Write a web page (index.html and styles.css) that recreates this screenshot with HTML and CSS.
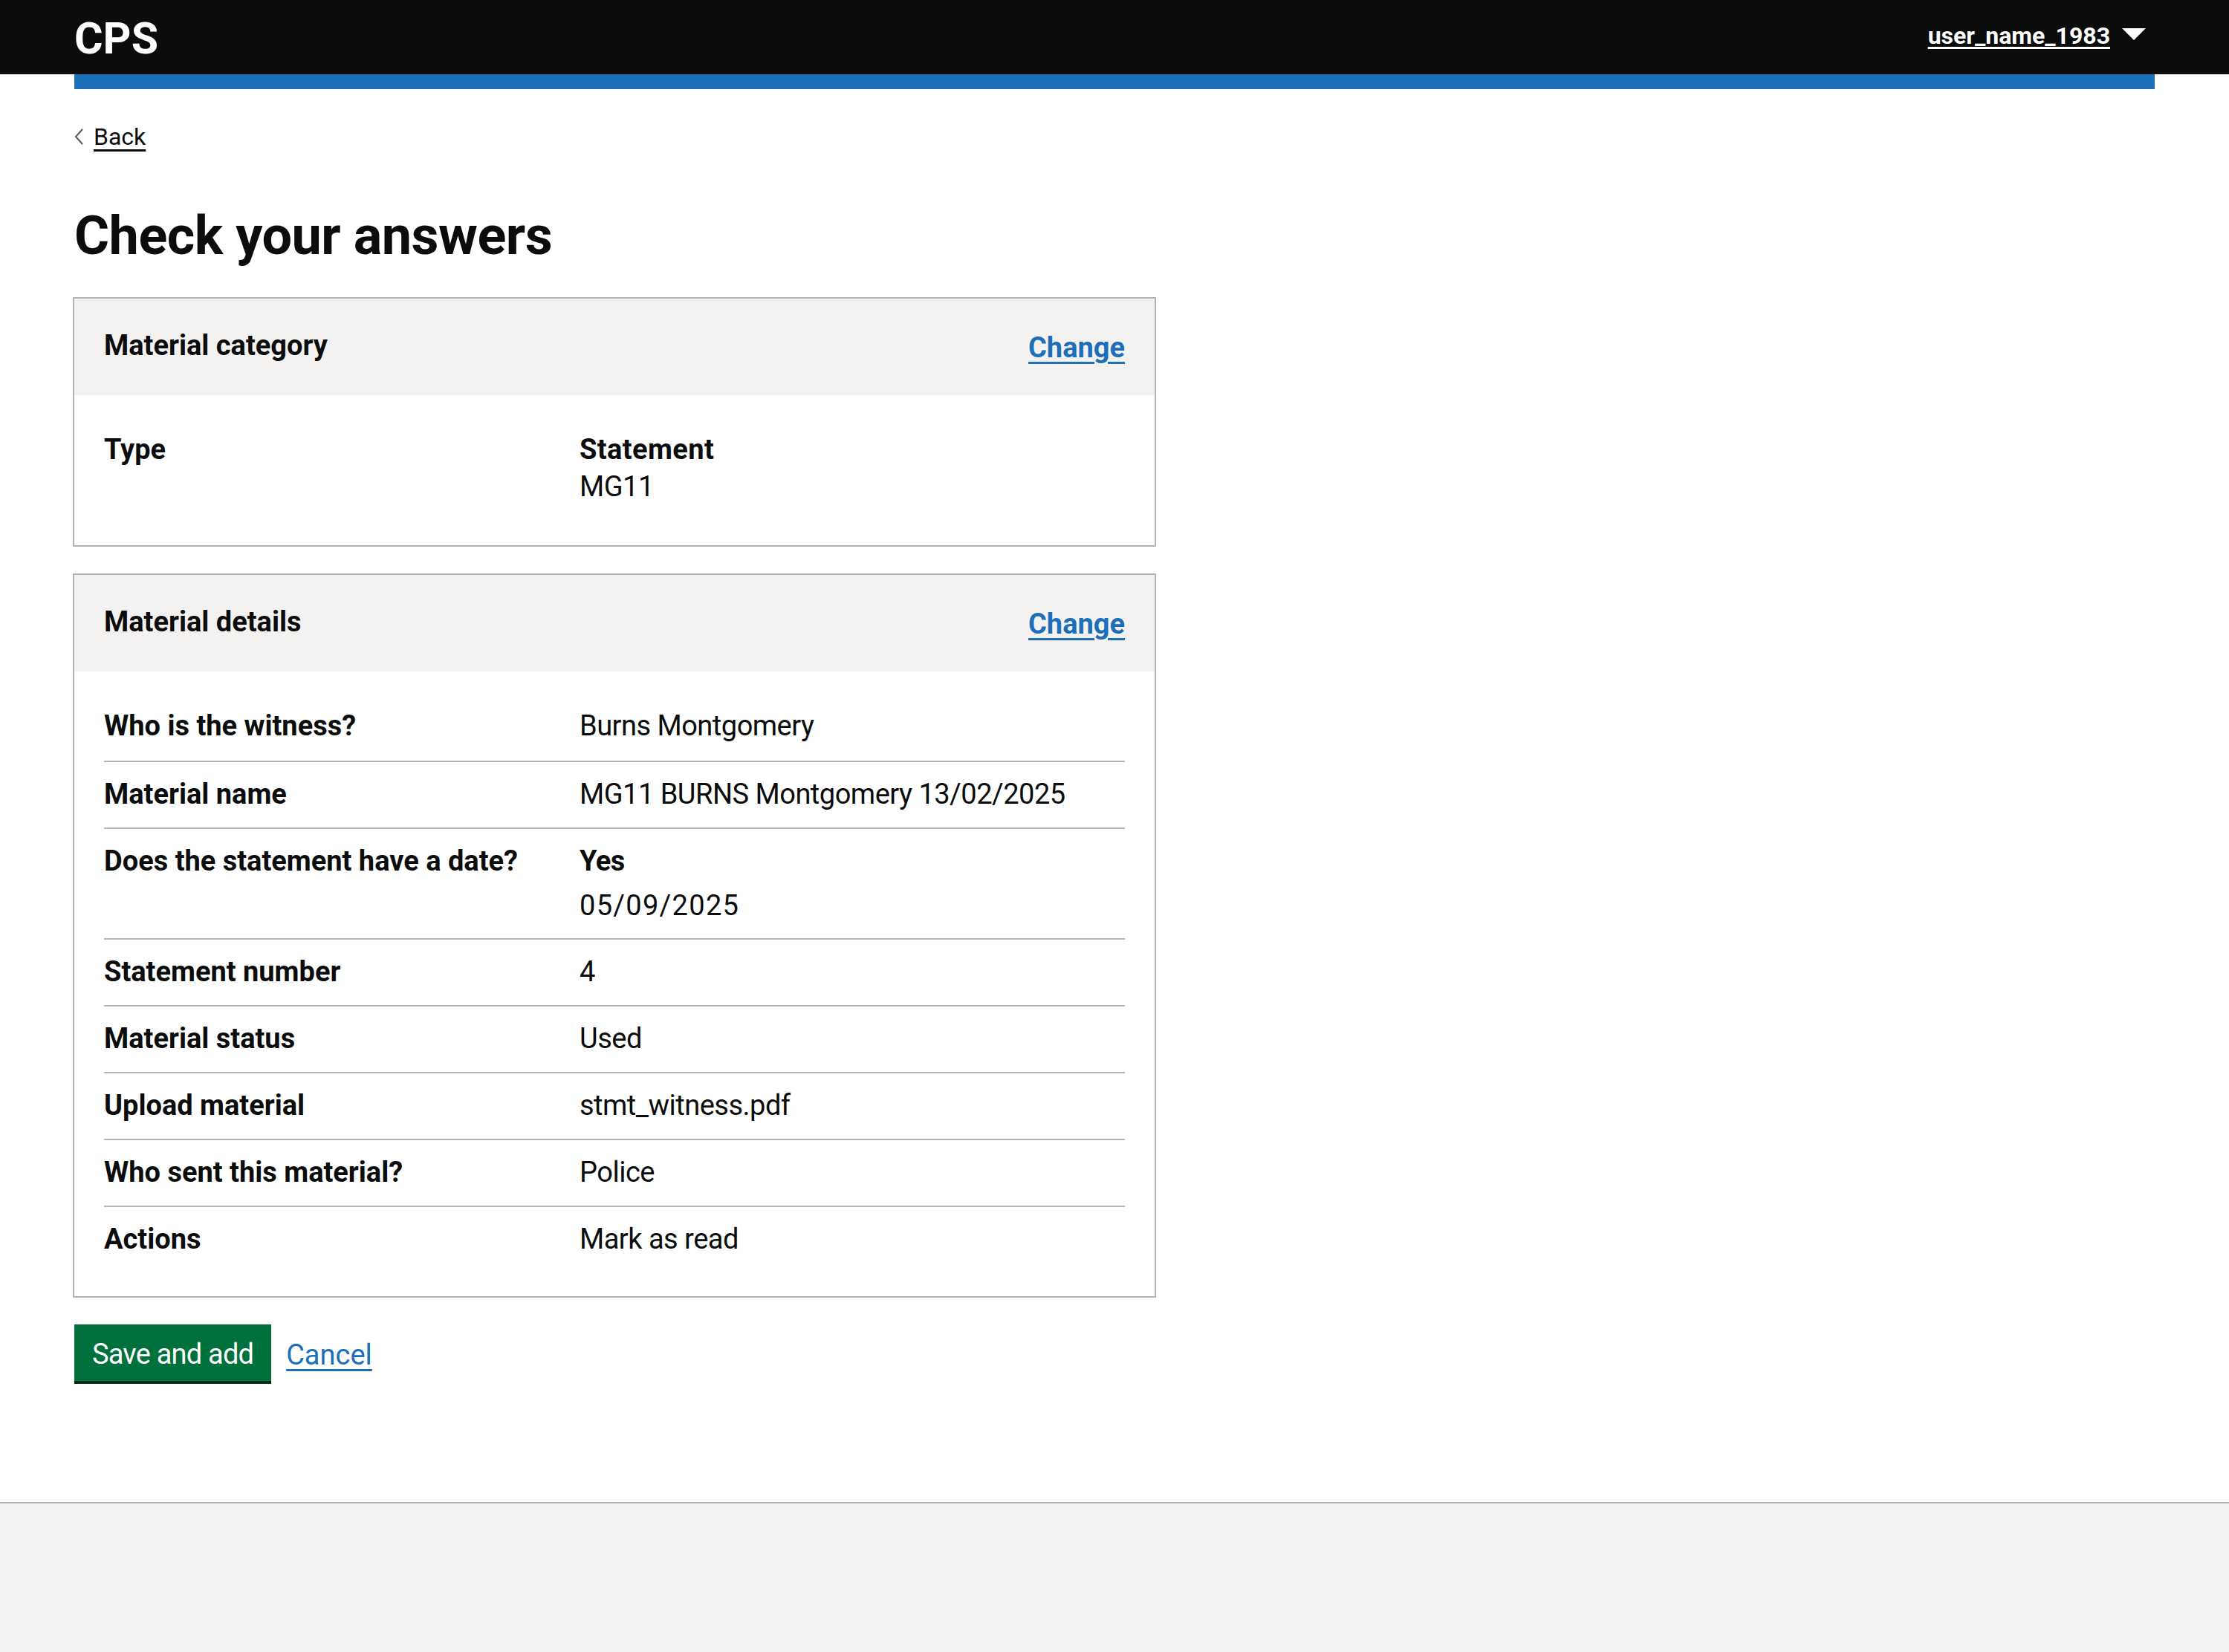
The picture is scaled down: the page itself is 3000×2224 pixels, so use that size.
FILE: index.html
```html
<!DOCTYPE html>
<html lang="en">
<head>
    <meta charset="UTF-8">
    <title>Check your answers</title>
    <link rel="stylesheet" href="styles.css">
</head>
<body>
    <header class="top-bar">
        <a class="logo">CPS</a>
        <div class="user-menu">
            <a class="user-name">user_name_1983</a>
            <svg class="user-caret" width="32" height="16" viewBox="0 0 32 16"><path d="M0 0H32L16 16Z" fill="#fff"/></svg>
        </div>
    </header>
    <div class="blue-bar"></div>

    <main class="page">
        <a class="back-link">
            <svg class="back-icon" width="12" height="24" viewBox="0 0 12 24"><path d="M11 2L2 12L11 22" fill="none" stroke="#505a5f" stroke-width="2"/></svg>
            <span>Back</span>
        </a>

        <h1>Check your answers</h1>

        <section class="card">
            <div class="card-header">
                <h2>Material category</h2>
                <a class="change-link">Change</a>
            </div>
            <dl class="card-body">
                <div class="row">
                    <dt>Type</dt>
                    <dd><strong>Statement</strong><br>MG11</dd>
                </div>
            </dl>
        </section>

        <section class="card">
            <div class="card-header">
                <h2>Material details</h2>
                <a class="change-link">Change</a>
            </div>
            <dl class="card-body">
                <div class="row">
                    <dt>Who is the witness?</dt>
                    <dd>Burns Montgomery</dd>
                </div>
                <div class="row">
                    <dt>Material name</dt>
                    <dd>MG11 BURNS Montgomery 13/02/2025</dd>
                </div>
                <div class="row">
                    <dt>Does the statement have a date?</dt>
                    <dd><p class="date-answer"><strong class="date-yes">Yes</strong></p><p class="date-answer date-value">05/09/2025</p></dd>
                </div>
                <div class="row">
                    <dt>Statement number</dt>
                    <dd>4</dd>
                </div>
                <div class="row">
                    <dt>Material status</dt>
                    <dd>Used</dd>
                </div>
                <div class="row">
                    <dt>Upload material</dt>
                    <dd>stmt_witness.pdf</dd>
                </div>
                <div class="row">
                    <dt>Who sent this material?</dt>
                    <dd>Police</dd>
                </div>
                <div class="row">
                    <dt>Actions</dt>
                    <dd>Mark as read</dd>
                </div>
            </dl>
        </section>

        <div class="actions">
            <button class="save-button" type="button">Save and add</button>
            <a class="cancel-link">Cancel</a>
        </div>
    </main>

    <footer class="footer"></footer>
</body>
</html>
```

FILE: styles.css
```css
* {
    box-sizing: border-box;
}

html, body {
    height: 100%;
}

body {
    margin: 0;
    display: flex;
    flex-direction: column;
    font-family: Roboto, Arial, sans-serif;
    font-size: 38px;
    line-height: 50px;
    color: #0b0c0c;
    background-color: #fff;
}

.top-bar {
    height: 100px;
    padding: 0 112px 0 100px;
    display: flex;
    justify-content: space-between;
    background-color: #0b0c0c;
    color: #fff;
}

.logo {
    padding-top: 2px;
    font-size: 59px;
    line-height: 100px;
    font-weight: 700;
}

.user-menu {
    display: flex;
    align-items: flex-start;
    gap: 16px;
    padding-top: 24px;
}

.user-name {
    font-size: 32px;
    line-height: 48px;
    font-weight: 700;
    text-decoration: underline;
    text-underline-offset: 4px;
}

.user-caret {
    margin-top: 14px;
}

.blue-bar {
    height: 20px;
    margin: 0 100px;
    background-color: #1d70b8;
}

.page {
    padding: 40px 100px 0;
    flex-grow: 1;
}

.back-link {
    display: flex;
    align-items: center;
    gap: 14px;
    font-size: 32px;
    line-height: 48px;
}

.back-link span {
    text-decoration: underline;
    text-underline-offset: 6px;
}

h1 {
    margin: 70px 0 42px;
    font-size: 72px;
    line-height: 80px;
    font-weight: 700;
    letter-spacing: -0.5px;
}

.card {
    width: 1458px;
    margin: 0 0 36px -2px;
    border: 2px solid #b1b4b6;
}

.card-header {
    height: 130px;
    padding: 0 40px;
    display: flex;
    justify-content: space-between;
    background-color: #f3f2f1;
}

h2 {
    margin: 0;
    padding-top: 38px;
    font-size: 38px;
    line-height: 50px;
    font-weight: 700;
}

.change-link {
    padding-top: 41px;
    font-weight: 700;
    color: #1d70b8;
    text-decoration: underline;
    text-underline-offset: 6px;
}

.card-body {
    margin: 0;
    padding: 30px 40px 32px;
}

.row {
    display: grid;
    grid-template-columns: 640px 1fr;
    padding: 18px 0 20px;
    border-bottom: 2px solid #b1b4b6;
}

.row:first-child {
    padding-bottom: 22px;
}

.row:last-child {
    border-bottom: none;
}

dt {
    font-weight: 700;
}

dd {
    margin: 0;
    letter-spacing: -0.5px;
}

dd strong {
    letter-spacing: 0.4px;
}

dd .date-yes {
    letter-spacing: -0.5px;
}

.date-answer {
    margin: 0 0 10px;
}

.date-answer:last-child {
    margin-bottom: -1px;
}

.date-value {
    letter-spacing: 1.3px;
}

.actions {
    display: flex;
    align-items: flex-start;
    gap: 20px;
    margin-top: 4px;
}

.save-button {
    height: 80px;
    padding: 0 24px;
    border: none;
    border-radius: 0;
    box-shadow: inset 0 -4px 0 #002d18;
    background-color: #00703c;
    color: #fff;
    font-family: inherit;
    font-size: 38px;
    letter-spacing: -0.8px;
}

.cancel-link {
    padding-top: 16px;
    color: #1d70b8;
    text-decoration: underline;
    text-underline-offset: 6px;
}

.footer {
    height: 202px;
    border-top: 2px solid #b1b4b6;
    background-color: #f3f2f1;
}
```
